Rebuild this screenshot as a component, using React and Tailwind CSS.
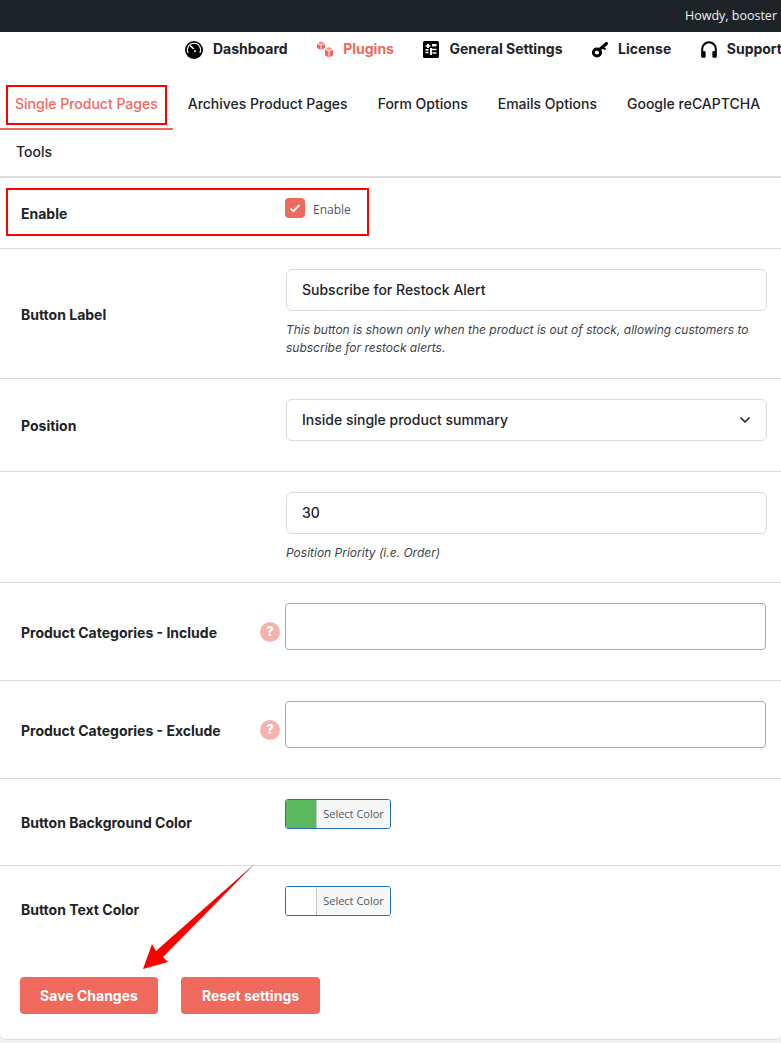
import React from 'react';
import { ChevronDown } from 'lucide-react';

const coral = '#f0695d';

function GaugeIcon() {
  return (
    <svg width="18" height="18" viewBox="0 0 18 18" className="shrink-0">
      <circle cx="9" cy="9" r="9" fill="#000" />
      <path d="M3.2 12a6.6 6.6 0 1 1 11.6 0" fill="none" stroke="#fff" strokeWidth="1.1" />
      <path d="M5.2 4.6 9.6 8.8" stroke="#fff" strokeWidth="1.5" />
      <circle cx="10" cy="10" r="2.6" fill="#000" />
      <circle cx="10" cy="10" r="1" fill="#fff" />
    </svg>
  );
}

function CubesIcon() {
  return (
    <svg width="16" height="17" viewBox="0 0 16 17" fill={coral} className="shrink-0">
      <path d="M4 .2 7.7 2 4 3.9.4 2z" fill="#f69a90" />
      <path d="M0 2.8 3.6 4.6v4.2L0 7z" />
      <path d="M8 2.8V7L4.4 8.8V4.6z" />
      <path d="M12 6 15.7 7.8 12 9.7 8.4 7.8z" fill="#f69a90" />
      <path d="M8 8.6l3.6 1.8v5.8L8 14.4z" />
      <path d="M16 8.6v5.8l-3.6 1.8v-5.8z" />
    </svg>
  );
}

function SlidersIcon() {
  return (
    <svg width="16" height="17" viewBox="0 0 16 17" className="shrink-0">
      <rect width="16" height="17" rx="1.5" fill="#000" />
      <path d="M2.5 5h5M2.5 11.5h3M8.5 8.5h5M9.5 12h4" stroke="#fff" strokeWidth="1.5" />
      <rect x="4" y="2.8" width="2" height="4.2" fill="#fff" />
      <rect x="9" y="3" width="4.5" height="2.4" fill="#fff" />
      <rect x="7" y="7" width="2" height="7" fill="#fff" />
      <rect x="2.5" y="8" width="3" height="1.6" fill="#fff" />
    </svg>
  );
}

function KeyIcon() {
  return (
    <svg width="16" height="17" viewBox="0 0 16 17" className="shrink-0">
      <circle cx="5" cy="11.5" r="3.6" fill="none" stroke="#000" strokeWidth="3" />
      <path d="M7 9 14.5 2.5" stroke="#000" strokeWidth="3" strokeLinecap="round" />
      <path d="M11 6.5 13.5 8.5" stroke="#000" strokeWidth="2.2" />
    </svg>
  );
}

function HeadsetIcon() {
  return (
    <svg width="16" height="17" viewBox="0 0 16 17" className="shrink-0">
      <path d="M1.2 11V8a6.8 6.8 0 0 1 13.6 0v3" fill="none" stroke="#000" strokeWidth="2" />
      <rect x="0.2" y="10" width="4.4" height="6.8" rx="1.2" fill="#000" />
      <rect x="11.4" y="10" width="4.4" height="6.8" rx="1.2" fill="#000" />
    </svg>
  );
}

function NavLink({ icon, active, children }) {
  return (
    <a className={'flex items-center gap-[10px] whitespace-nowrap font-bold text-[14px] ' + (active ? 'text-[#f0695d]' : 'text-[#1d2327]')}>
      {icon}
      <span className="mb-[2px]">{children}</span>
    </a>
  );
}

function Tab({ active, children }) {
  return (
    <a className={'block whitespace-nowrap px-[15px] h-[52px] leading-[52px] text-[14px] font-medium ' + (active ? 'text-[#f0695d] border-b-2 border-[#f0695d]' : 'text-[#1d2327]')}>
      {children}
    </a>
  );
}

function Row({ label, className, children, labelClass }) {
  return (
    <div className={'flex border-b border-[#dcdcde] ' + className}>
      <div className={'w-[285px] pl-[21px] shrink-0 text-[14px] font-bold text-[#1d2327] ' + (labelClass || '')}>{label}</div>
      <div className="flex-1 min-w-0">{children}</div>
    </div>
  );
}

function TextBox({ children }) {
  return (
    <div className="ml-[1px] mr-[14px] h-[42px] flex items-center pl-[15px] pb-[2px] rounded-md border border-[#dcdcde] bg-white text-[14px] font-medium text-[#1d2327]">
      {children}
    </div>
  );
}

function ColorPicker({ color }) {
  return (
    <div className="flex w-[106px] h-[30px] rounded-[3px] border border-[#2271b1] overflow-hidden text-[11px] text-[#50575e] font-['Open_Sans',sans-serif]">
      <span className="w-[31px] border-r border-[#c3c4c7]" style={{ background: color }} />
      <span className="flex-1 flex items-center justify-center bg-[#f6f7f7]">Select Color</span>
    </div>
  );
}

function HelpDot() {
  return (
    <span className="w-5 h-5 rounded-full bg-[#f6b3ad] text-white text-[13px] font-extrabold flex items-center justify-center">?</span>
  );
}

function CategoryRow({ label, className }) {
  return (
    <div className={'flex border-b border-[#dcdcde] pt-5 ' + className}>
      <div className="w-[260px] pl-[21px] pt-[19px] shrink-0 text-[14px] font-bold text-[#1d2327]">{label}</div>
      <div className="pt-[19px]"><HelpDot /></div>
      <div className="ml-[5px] mr-[15px] flex-1 h-[47px] rounded-[4px] border border-[#a7aaad] bg-white" />
    </div>
  );
}

function RedButton({ children, className }) {
  return (
    <button className={'h-[37px] rounded-[4px] bg-[#f0695d] text-white text-[14px] font-bold ' + className}>
      {children}
    </button>
  );
}

export default function App() {
  return (
    <div className="relative w-[781px] h-[1043px] overflow-hidden bg-[#f0f0f1] font-['Inter',sans-serif]">
      <div className="h-8 bg-[#1d2327] flex items-center justify-end pr-1 text-[12.5px] text-[#f0f0f1] font-['Open_Sans',sans-serif]">
        Howdy, booster
      </div>

      <div className="h-[1008px] bg-white rounded-b-md border-b border-[#dcdcde]">
        <div className="h-[46px] pl-[185px] pt-[6px] flex items-start gap-[29.5px] overflow-hidden">
          <NavLink icon={<GaugeIcon />}>Dashboard</NavLink>
          <NavLink icon={<CubesIcon />} active>Plugins</NavLink>
          <NavLink icon={<SlidersIcon />}>General Settings</NavLink>
          <NavLink icon={<KeyIcon />}>License</NavLink>
          <NavLink icon={<HeadsetIcon />}>Support</NavLink>
        </div>

        <div className="border-b-2 border-[#dcdcde]">
          <div className="flex">
            <Tab active>Single Product Pages</Tab>
            <Tab>Archives Product Pages</Tab>
            <Tab>Form Options</Tab>
            <Tab>Emails Options</Tab>
            <Tab>Google reCAPTCHA</Tab>
          </div>
          <div className="flex h-[46px] items-center px-4 pb-1 text-[14px] font-medium text-[#1d2327]">Tools</div>
        </div>

        <Row label="Enable" className="h-[71px]" labelClass="pt-[25px]">
          <label className="flex items-start gap-[8px] pt-[20px]">
            <span className="w-5 h-5 rounded-[4px] bg-[#f0695d] flex items-center justify-center">
              <svg width="12" height="12" viewBox="0 0 12 12" fill="none" stroke="#fff" strokeWidth="2"><path d="M1.5 6.5 4.5 9.2 10.5 3" /></svg>
            </span>
            <span className="mt-[4px] leading-4 text-[12px] text-[#50575e] font-['Open_Sans',sans-serif]">Enable</span>
          </label>
        </Row>

        <Row label="Button Label" className="h-[130px]" labelClass="pt-[55px]">
          <div className="pt-5">
            <TextBox>Subscribe for Restock Alert</TextBox>
            <p className="mt-[10px] ml-[1px] mr-[14px] text-[12px] leading-[18px] italic text-[#3c434a]">
              This button is shown only when the product is out of stock, allowing customers to subscribe for restock alerts.
            </p>
          </div>
        </Row>

        <Row label="Position" className="h-[93px]" labelClass="pt-[36px]">
          <div className="pt-5">
            <div className="ml-[1px] mr-[14px] h-[42px] flex items-center justify-between pl-[15px] pr-[13px] rounded-md border border-[#dcdcde] bg-white text-[14px] font-medium text-[#1d2327]">
              <span className="mb-[2px]">Inside single product summary</span>
              <ChevronDown size={16} strokeWidth={2.5} />
            </div>
          </div>
        </Row>

        <Row label="" className="h-[111px]">
          <div className="pt-5">
            <TextBox>30</TextBox>
            <p className="mt-[10px] ml-[1px] text-[12px] leading-[18px] italic text-[#3c434a]">Position Priority (i.e. Order)</p>
          </div>
        </Row>

        <CategoryRow label="Product Categories - Include" className="h-[98px]" />
        <CategoryRow label="Product Categories - Exclude" className="h-[98px]" />

        <Row label="Button Background Color" className="h-[87px]" labelClass="pt-[33px]">
          <div className="pt-5"><ColorPicker color="#5cb85c" /></div>
        </Row>

        <div className="flex h-[99px]">
          <div className="w-[285px] pl-[21px] pt-[33px] shrink-0 text-[14px] font-bold text-[#1d2327]">Button Text Color</div>
          <div className="pt-5"><ColorPicker color="#fff" /></div>
        </div>

        <div className="flex gap-[23px] pl-5 pt-[12px]">
          <RedButton className="w-[138px]">Save Changes</RedButton>
          <RedButton className="w-[139px]">Reset settings</RedButton>
        </div>
      </div>

      {/* annotations on top of the screenshot */}
      <div className="absolute left-[6px] top-[85px] w-[161px] h-[40px] border-2 border-[#ff0000]" />
      <div className="absolute left-[6px] top-[188px] w-[363px] h-[48px] border-2 border-[#ff0000]" />
      <svg className="absolute left-[140px] top-[860px]" width="120" height="112" viewBox="0 0 120 112">
        <path d="M115.5 3 23 97 28 102 3 109 12 84 16 91z" fill="#ff0000" />
      </svg>
    </div>
  );
}
